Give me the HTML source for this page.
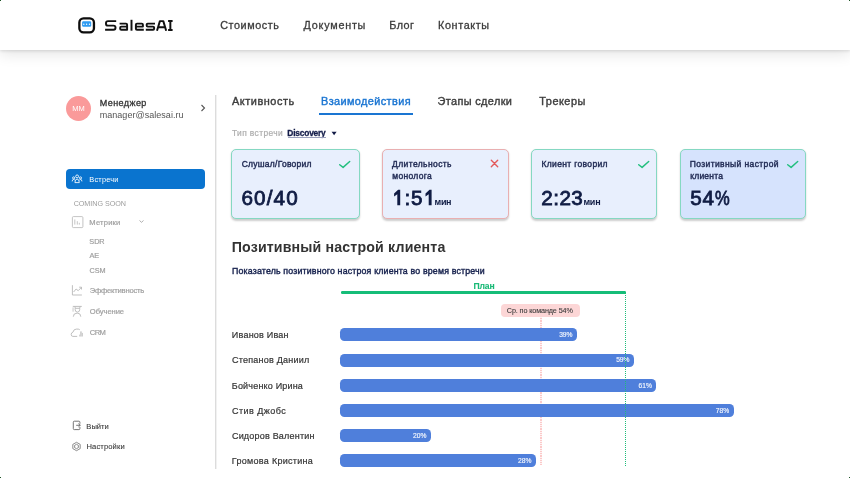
<!DOCTYPE html>
<html><head><meta charset="utf-8">
<style>
*{margin:0;padding:0;box-sizing:border-box}
html,body{width:850px;height:478px;overflow:hidden;background:#fff}
#root{position:relative;width:850px;height:478px;overflow:hidden;background:#fff;will-change:transform;font-family:"Liberation Sans",sans-serif}
.a{position:absolute;white-space:nowrap}
.hdr{position:absolute;left:0;top:0;width:850px;height:50px;background:#fff;box-shadow:0 1px 3px rgba(0,0,0,0.12),0 4px 14px rgba(0,0,0,0.11);z-index:2}
.card{position:absolute;top:149.1px;height:69.5px;border-radius:5px;background:#e8effd;border:1px solid #85d8c2;box-shadow:0 1.3px 2px rgba(0,0,0,0.2)}
.bar{position:absolute;left:340px;height:13.2px;border-radius:4.5px;background:#4f7fdb}
</style></head><body><div id="root">
<div class="hdr">
  <svg class="a" style="left:77px;top:16px" width="20" height="20" viewBox="0 0 20 20"><rect x="2.35" y="2.35" width="14.6" height="14.1" rx="4.2" fill="none" stroke="#0d0d0d" stroke-width="2.3"/><rect x="5.1" y="5.3" width="9.1" height="5.5" rx="1.3" fill="#2f9cf2"/><g fill="#fff"><circle cx="6.8" cy="8.2" r="0.7"/><circle cx="9.6" cy="8.2" r="0.7"/><circle cx="12.5" cy="8.2" r="0.7"/></g></svg>
  <svg class="a" style="left:0;top:0" width="200" height="50" viewBox="0 0 200 50"><g fill="none" stroke="#111" stroke-width="1.95" stroke-linejoin="round">
<path d="M116.2 21.1H108Q106 21.1 106 23.1V23.7Q106 25.6 108 25.6H113.5Q115.5 25.6 115.5 27.6V27.8Q115.5 29.8 113.5 29.8H105.1"/>
<path d="M119.6 23.6H126Q127.1 23.6 127.1 24.7V29.8H121.3Q120.2 29.8 120.2 28.7V27.7Q120.2 26.6 121.3 26.6H127.1"/>
<path d="M131.5 19.8V30.7"/>
<path d="M143.8 29.8H137Q135.9 29.8 135.9 28.7V24.7Q135.9 23.6 137 23.6H141.8Q142.9 23.6 142.9 24.7V26.6H135.9"/>
<path d="M155 23.6H147.7Q146.7 23.6 146.7 24.6V25.6Q146.7 26.6 147.7 26.6H153.1Q154.1 26.6 154.1 27.6V28.8Q154.1 29.8 153.1 29.8H145.8"/>
<path d="M157 30.7L159.9 21.1H163.3L166.2 30.7M158.3 27.2H164.9"/>
<path d="M168.1 21H172.6M170.35 21V29.9M168.1 29.9H172.6"/>
</g></svg>
  <div class="a" style="left:220.22px;top:20.40px;font-size:10.8px;line-height:10.8px;letter-spacing:0.574px;color:#3b3b3b;-webkit-text-stroke-width:0.3px;">Стоимость</div>
  <div class="a" style="left:303.60px;top:20.40px;font-size:10.8px;line-height:10.8px;letter-spacing:0.762px;color:#3b3b3b;-webkit-text-stroke-width:0.3px;">Документы</div>
  <div class="a" style="left:389.29px;top:20.40px;font-size:10.8px;line-height:10.8px;letter-spacing:0.444px;color:#3b3b3b;-webkit-text-stroke-width:0.3px;">Блог</div>
  <div class="a" style="left:437.99px;top:20.40px;font-size:10.8px;line-height:10.8px;letter-spacing:0.645px;color:#3b3b3b;-webkit-text-stroke-width:0.3px;">Контакты</div>
</div>

<!-- sidebar -->
<div class="a" style="left:66px;top:96px;width:25px;height:25px;border-radius:50%;background:#fa9a9a"></div>
<div class="a" style="left:66px;top:105px;width:25px;text-align:center;font-size:7.5px;line-height:7.5px;color:#fff">MM</div>
<div class="a" style="left:99.68px;top:99.10px;font-size:9px;line-height:9px;letter-spacing:0.433px;color:#333;-webkit-text-stroke-width:0.3px;">Менеджер</div>
<div class="a" style="left:99.71px;top:110.60px;font-size:9px;line-height:9px;letter-spacing:0.038px;color:#555;">manager@salesai.ru</div>
<svg class="a" style="left:199px;top:103px" width="8" height="10" viewBox="0 0 8 10"><path d="M2.5 2 L5.5 5 L2.5 8" fill="none" stroke="#555" stroke-width="1.1"/></svg>
<div class="a" style="left:215px;top:95px;width:2px;height:374px;background:linear-gradient(to right,#dcdcdc 0,#dcdcdc 50%,#f1f1f1 50%,#f1f1f1 100%)"></div>

<div class="a" style="left:66.3px;top:169.4px;width:138.6px;height:19.2px;border-radius:4px;background:#0a74cf"></div>
<svg class="a" style="left:71px;top:173px" width="12" height="11" viewBox="0 0 12 11"><g fill="none" stroke="#fff" stroke-width="0.85"><circle cx="6.1" cy="3.4" r="1.45"/><circle cx="2.6" cy="4.9" r="1.05"/><circle cx="9.5" cy="4.9" r="1.05"/><path d="M3.9 9.6Q3.9 6.1 6.1 6.1Q8.3 6.1 8.3 9.6Z"/><path d="M1.2 8.4Q1.2 6.4 2.6 6.4Q3.3 6.4 3.8 7"/><path d="M10.9 8.4Q10.9 6.4 9.5 6.4Q8.8 6.4 8.4 7"/></g></svg>
<div class="a" style="left:89.31px;top:175.80px;font-size:7.4px;line-height:7.4px;letter-spacing:0.198px;color:#fff;">Встречи</div>

<div class="a" style="left:73.63px;top:199.60px;font-size:7.2px;line-height:7.2px;letter-spacing:-0.033px;color:#9c9c9c;">COMING SOON</div>
<svg class="a" style="left:71px;top:215px" width="13" height="14" viewBox="0 0 13 14"><g fill="none" stroke="#b5b5b5" stroke-width="0.8"><rect x="1.4" y="1.6" width="10.5" height="11" rx="1"/><path d="M3.8 4.5V9.6M6.3 6.2V9.6M8.3 7.8V9.6"/></g></svg>
<div class="a" style="left:89.37px;top:218.60px;font-size:7.6px;line-height:7.6px;letter-spacing:0.186px;color:#9f9f9f;-webkit-text-stroke-width:0.2px;">Метрики</div>
<svg class="a" style="left:138px;top:219px" width="7" height="5" viewBox="0 0 7 5"><path d="M1.5 1.5 L3.5 3.3 L5.5 1.5" fill="none" stroke="#999" stroke-width="0.8"/></svg>
<div class="a" style="left:89.37px;top:237.70px;font-size:7.3px;line-height:7.3px;letter-spacing:-0.1px;color:#9f9f9f;-webkit-text-stroke-width:0.2px;">SDR</div>
<div class="a" style="left:89.54px;top:252.30px;font-size:7.3px;line-height:7.3px;letter-spacing:-0.1px;color:#9f9f9f;-webkit-text-stroke-width:0.2px;">AE</div>
<div class="a" style="left:89.47px;top:267.00px;font-size:7.3px;line-height:7.3px;letter-spacing:-0.1px;color:#9f9f9f;-webkit-text-stroke-width:0.2px;">CSM</div>
<svg class="a" style="left:70px;top:284px" width="14" height="13" viewBox="0 0 14 13"><g fill="none" stroke="#b8b8b8" stroke-width="0.9"><path d="M2.4 1.2V11H11.9"/><path d="M3.6 8L6.1 5L8.2 6.7L11.4 3.4M9.2 3.2H11.5V5.5"/></g></svg>
<div class="a" style="left:89.71px;top:286.70px;font-size:7.6px;line-height:7.6px;letter-spacing:-0.198px;color:#9f9f9f;-webkit-text-stroke-width:0.2px;">Эффективность</div>
<svg class="a" style="left:68px;top:303px" width="18" height="18" viewBox="0 0 18 18"><rect x="4.2" y="4.4" width="1.9" height="4.3" fill="#e2e2e2"/><g fill="none" stroke="#b3b3b3" stroke-width="0.85"><path d="M4.8 3.4H13.8"/><path d="M6.9 3.6L7.3 5.3H11.7L12.1 3.6"/><path d="M7.2 5.3V6.6Q7.2 9.1 9.45 9.1Q11.7 9.1 11.7 6.6V5.3"/><path d="M5.3 13.7Q5.3 10.1 9.2 10.1Q12.8 10.1 12.8 13.7"/></g></svg>
<div class="a" style="left:89.87px;top:308.20px;font-size:7.6px;line-height:7.6px;letter-spacing:-0.075px;color:#9f9f9f;-webkit-text-stroke-width:0.2px;">Обучение</div>
<svg class="a" style="left:68px;top:324px" width="18" height="16" viewBox="0 0 18 16"><path d="M9.2 12.4H4.9Q3.2 12.4 3.2 10.4Q3.2 8.6 5 8.1Q5.6 5.1 8.3 5.1H10.2Q11.2 5.1 11.8 5.8" fill="none" stroke="#b3b3b3" stroke-width="0.85"/><g fill="#c9c9c9"><rect x="11.2" y="10.6" width="1" height="1.9"/><rect x="12.2" y="7.4" width="1.5" height="5.1"/><rect x="13.8" y="8.9" width="1.1" height="3.6"/></g></svg>
<div class="a" style="left:89.86px;top:328.80px;font-size:7.6px;line-height:7.6px;letter-spacing:-0.691px;color:#9f9f9f;-webkit-text-stroke-width:0.2px;">CRM</div>

<svg class="a" style="left:72px;top:420px" width="10" height="11" viewBox="0 0 10 11"><g fill="none" stroke="#6e6e6e" stroke-width="0.95" stroke-linecap="round" stroke-linejoin="round"><path d="M7.9 3.4V2.2Q7.9 1.2 6.9 1.2H2.3Q1.3 1.2 1.3 2.2V8.6Q1.3 9.6 2.3 9.6H6.9Q7.9 9.6 7.9 8.6V7.4"/><path d="M4.6 5.3H8.1M6.7 3.9L8.2 5.3L6.7 6.7"/></g></svg>
<div class="a" style="left:86.34px;top:423.10px;font-size:7.6px;line-height:7.6px;letter-spacing:-0.01px;color:#3a3a3a;-webkit-text-stroke-width:0.1px;">Выйти</div>
<svg class="a" style="left:71px;top:441px" width="11" height="11" viewBox="0 0 11 11"><g fill="none" stroke="#707070" stroke-width="0.8" stroke-linejoin="round"><path d="M5.5 1.3L9.2 3.4V7.6L5.5 9.7L1.8 7.6V3.4Z"/><path d="M5.5 3.3L7.4 4.4V6.6L5.5 7.7L3.6 6.6V4.4Z"/></g></svg>
<div class="a" style="left:86.54px;top:443.00px;font-size:7.6px;line-height:7.6px;letter-spacing:0.107px;color:#3a3a3a;-webkit-text-stroke-width:0.1px;">Настройки</div>

<!-- tabs -->
<div class="a" style="left:231.99px;top:95.60px;font-size:10.9px;line-height:10.9px;letter-spacing:0.553px;color:#3d3d3d;-webkit-text-stroke-width:0.4px;">Активность</div>
<div class="a" style="left:321.01px;top:95.50px;font-size:10.9px;line-height:10.9px;letter-spacing:0.395px;color:#1a75d2;-webkit-text-stroke-width:0.4px;">Взаимодействия</div>
<div class="a" style="left:319px;top:113px;width:94px;height:2px;background:#1a75d2"></div>
<div class="a" style="left:437.52px;top:95.60px;font-size:10.9px;line-height:10.9px;letter-spacing:0.377px;color:#3d3d3d;-webkit-text-stroke-width:0.4px;">Этапы сделки</div>
<div class="a" style="left:539.27px;top:95.60px;font-size:10.9px;line-height:10.9px;letter-spacing:0.515px;color:#3d3d3d;-webkit-text-stroke-width:0.4px;">Трекеры</div>

<div class="a" style="left:231.96px;top:128.90px;font-size:8.4px;line-height:8.4px;letter-spacing:0.394px;color:#adadad;-webkit-text-stroke-width:0.2px;">Тип встречи</div>
<div class="a" style="left:287.36px;top:128.90px;font-size:8.4px;line-height:8.4px;letter-spacing:-0.207px;color:#141d4a;font-weight:700;-webkit-text-stroke-width:0.3px;">Discovery</div>
<div class="a" style="left:287.5px;top:137px;width:38.7px;height:0.8px;background:#9aa0bc"></div>
<svg class="a" style="left:330px;top:131px" width="8" height="6" viewBox="0 0 8 6"><path d="M1.6 0.8H6.6L4.1 4.3Z" fill="#111a45"/></svg>

<!-- cards -->
<div class="card" style="left:231px;width:129px">
  <svg style="position:absolute;left:106.2px;top:9.5px" width="13" height="9" viewBox="0 0 13 9"><path d="M1.7 4.75L5.1 7.4L11.7 1.5" fill="none" stroke="#22bf7e" stroke-width="1.45" stroke-linecap="round" stroke-linejoin="round"/></svg>
</div>
<div class="card" style="left:382px;width:127px;border-color:#e9afb1">
  <svg style="position:absolute;left:107.1px;top:8.5px" width="9" height="9" viewBox="0 0 9 9"><path d="M1.3 1.3L7.7 7.7M7.7 1.3L1.3 7.7" fill="none" stroke="#e35a5c" stroke-width="1.4" stroke-linecap="round"/></svg>
</div>
<div class="card" style="left:531px;width:126px">
  <svg style="position:absolute;left:105px;top:9.5px" width="13" height="9" viewBox="0 0 13 9"><path d="M1.7 4.75L5.1 7.4L11.7 1.5" fill="none" stroke="#22bf7e" stroke-width="1.45" stroke-linecap="round" stroke-linejoin="round"/></svg>
</div>
<div class="card" style="left:680px;width:126px;background:#d6e3fd">
  <svg style="position:absolute;left:104.5px;top:9.5px" width="13" height="9" viewBox="0 0 13 9"><path d="M1.7 4.75L5.1 7.4L11.7 1.5" fill="none" stroke="#22bf7e" stroke-width="1.45" stroke-linecap="round" stroke-linejoin="round"/></svg>
</div>
<div class="a" style="left:241.68px;top:160.40px;font-size:8.5px;line-height:8.5px;letter-spacing:0.255px;color:#222c55;-webkit-text-stroke-width:0.4px;">Слушал/Говорил</div>
<div class="a" style="left:241.48px;top:188.10px;font-size:20.7px;line-height:20.7px;letter-spacing:1.113px;color:#101c44;-webkit-text-stroke-width:0.8px;">60/40</div>
<div class="a" style="left:392.10px;top:160.10px;font-size:8.5px;line-height:8.5px;letter-spacing:0.391px;color:#222c55;-webkit-text-stroke-width:0.4px;">Длительность</div>
<div class="a" style="left:392.27px;top:171.60px;font-size:8.5px;line-height:8.5px;letter-spacing:0.303px;color:#222c55;-webkit-text-stroke-width:0.4px;">монолога</div>
<svg class="a" style="left:0;top:0;overflow:visible" width="1" height="1"><path d="M397.3 205.2V194.2L394.1 196.5V193.4L398.1 189.7H400.2V205.2Z M428.7 205.2V194.2L425.5 196.5V193.4L429.5 189.7H431.6V205.2Z" fill="#101c44"/></svg>
<div class="a" style="left:404.55px;top:187.90px;font-size:20.7px;line-height:20.7px;letter-spacing:0px;color:#101c44;-webkit-text-stroke-width:0.8px;">:</div>
<div class="a" style="left:410.98px;top:187.90px;font-size:20.7px;line-height:20.7px;letter-spacing:0px;color:#101c44;-webkit-text-stroke-width:0.8px;">5</div>
<div class="a" style="left:434.61px;top:197.90px;font-size:9px;line-height:9px;letter-spacing:-0.353px;color:#101c44;font-weight:700;">мин</div>
<div class="a" style="left:541.47px;top:160.10px;font-size:8.5px;line-height:8.5px;letter-spacing:0.348px;color:#222c55;-webkit-text-stroke-width:0.4px;">Клиент говорил</div>
<div class="a" style="left:541.34px;top:187.80px;font-size:20.7px;line-height:20.7px;letter-spacing:0.419px;color:#101c44;-webkit-text-stroke-width:0.8px;">2:23</div>
<div class="a" style="left:583.41px;top:197.80px;font-size:9px;line-height:9px;letter-spacing:-0.203px;color:#101c44;font-weight:700;">мин</div>
<div class="a" style="left:689.73px;top:159.90px;font-size:8.5px;line-height:8.5px;letter-spacing:0.388px;color:#222c55;-webkit-text-stroke-width:0.4px;">Позитивный настрой</div>
<div class="a" style="left:690.27px;top:171.50px;font-size:8.5px;line-height:8.5px;letter-spacing:0.193px;color:#222c55;-webkit-text-stroke-width:0.4px;">клиента</div>
<div class="a" style="left:690.23px;top:187.90px;font-size:20.7px;line-height:20.7px;letter-spacing:0px;color:#101c44;-webkit-text-stroke-width:0.8px;">5</div>
<div class="a" style="left:702.55px;top:187.90px;font-size:20.7px;line-height:20.7px;letter-spacing:0px;color:#101c44;-webkit-text-stroke-width:0.8px;">4</div>
<div class="a" style="left:714.75px;top:187.90px;font-size:20.7px;line-height:20.7px;letter-spacing:0px;color:#101c44;-webkit-text-stroke-width:0.8px;transform:scaleX(0.8);transform-origin:0 0;">%</div>

<!-- chart -->
<div class="a" style="left:231.70px;top:239.80px;font-size:14.2px;line-height:14.2px;letter-spacing:0.153px;color:#333;font-weight:700;">Позитивный настрой клиента</div>
<div class="a" style="left:232.02px;top:267.10px;font-size:8.8px;line-height:8.8px;letter-spacing:0.17px;color:#17224e;-webkit-text-stroke-width:0.4px;">Показатель позитивного настроя клиента во время встречи</div>
<div class="a" style="left:473.56px;top:282.00px;font-size:8.6px;line-height:8.6px;letter-spacing:-0.187px;color:#19b976;font-weight:700;-webkit-text-stroke-width:0.1px;">План</div>
<div class="a" style="left:341.3px;top:291.1px;width:284.7px;height:2.6px;border-radius:1.3px;background:#15bd78"></div>
<div class="a" style="left:540px;top:316px;width:1.6px;height:149px;background:repeating-linear-gradient(to bottom,#fbcaca 0,#fbcaca 1.1px,#fef3f3 1.1px,#fef3f3 2.25px)"></div>
<div class="a" style="left:501px;top:303.7px;width:79px;height:12.9px;border-radius:4px;background:#fcd6d6"></div>
<div class="a" style="left:506.85px;top:307.00px;font-size:7.2px;line-height:7.2px;letter-spacing:-0.105px;color:#3a3a3a;-webkit-text-stroke-width:0.1px;">Ср. по команде 54%</div>

<div class="a" style="left:231.82px;top:331.20px;font-size:9px;line-height:9px;letter-spacing:0.221px;color:#353535;-webkit-text-stroke-width:0.2px;">Иванов Иван</div>
<div class="a" style="left:231.93px;top:356.45px;font-size:9px;line-height:9px;letter-spacing:0.236px;color:#353535;-webkit-text-stroke-width:0.2px;">Степанов Даниил</div>
<div class="a" style="left:231.82px;top:381.70px;font-size:9px;line-height:9px;letter-spacing:0.187px;color:#353535;-webkit-text-stroke-width:0.2px;">Бойченко Ирина</div>
<div class="a" style="left:231.93px;top:406.95px;font-size:9px;line-height:9px;letter-spacing:0.475px;color:#353535;-webkit-text-stroke-width:0.2px;">Стив Джобс</div>
<div class="a" style="left:231.93px;top:432.20px;font-size:9px;line-height:9px;letter-spacing:0.207px;color:#353535;-webkit-text-stroke-width:0.2px;">Сидоров Валентин</div>
<div class="a" style="left:231.82px;top:457.45px;font-size:9px;line-height:9px;letter-spacing:0.289px;color:#353535;-webkit-text-stroke-width:0.2px;">Громова Кристина</div>

<div class="bar" style="top:328.3px;width:237px"></div>
<div class="bar" style="top:353.6px;width:293.6px"></div>
<div class="bar" style="top:378.9px;width:316.2px"></div>
<div class="bar" style="top:404.2px;width:393.8px"></div>
<div class="bar" style="top:429.1px;width:90.7px"></div>
<div class="bar" style="top:454.3px;width:195.5px"></div>
<div class="a" style="left:559.14px;top:332.10px;font-size:6.7px;line-height:6.7px;letter-spacing:0px;color:#f4f7fd;-webkit-text-stroke-width:0.15px;">39%</div>
<div class="a" style="left:616.14px;top:357.35px;font-size:6.7px;line-height:6.7px;letter-spacing:0px;color:#f4f7fd;-webkit-text-stroke-width:0.15px;">59%</div>
<div class="a" style="left:638.44px;top:382.60px;font-size:6.7px;line-height:6.7px;letter-spacing:0px;color:#f4f7fd;-webkit-text-stroke-width:0.15px;">61%</div>
<div class="a" style="left:715.84px;top:407.85px;font-size:6.7px;line-height:6.7px;letter-spacing:0px;color:#f4f7fd;-webkit-text-stroke-width:0.15px;">78%</div>
<div class="a" style="left:412.94px;top:433.10px;font-size:6.7px;line-height:6.7px;letter-spacing:0px;color:#f4f7fd;-webkit-text-stroke-width:0.15px;">20%</div>
<div class="a" style="left:517.94px;top:458.35px;font-size:6.7px;line-height:6.7px;letter-spacing:0px;color:#f4f7fd;-webkit-text-stroke-width:0.15px;">28%</div>
<div class="a" style="left:625px;top:293px;width:0;height:173px;border-left:1px dotted #1dbd7a"></div>
<div class="a" style="left:0;top:0;width:1px;height:1px;background:#1d5426;z-index:9"></div>
<div class="a" style="left:849px;top:0;width:1px;height:1px;background:#1d5426;z-index:9"></div>
<div class="a" style="left:0;top:477px;width:1px;height:1px;background:#1d5426;z-index:9"></div>
<div class="a" style="left:849px;top:477px;width:1px;height:1px;background:#1d5426;z-index:9"></div>
</div></body></html>
